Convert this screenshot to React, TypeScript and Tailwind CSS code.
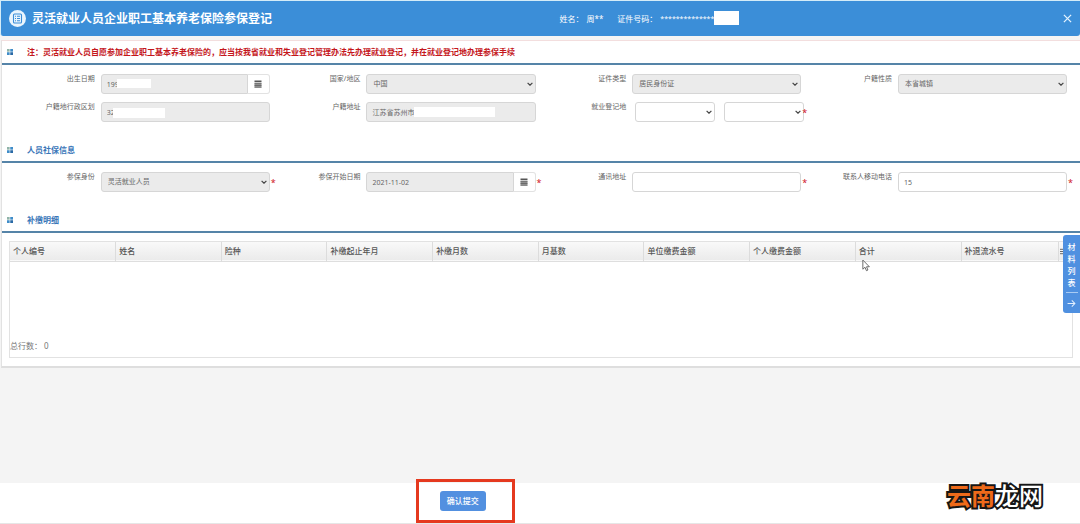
import { useId, type ReactNode } from 'react';

const controlBase =
  'block h-5 w-full min-w-0 rounded-[3px] border border-[#d6d6d6] text-[7px] leading-[18px] text-[#666] opacity-100 outline-none';

function GridMark() {
  return (
    <svg viewBox="0 0 10 10" className="size-[6px] shrink-0" aria-hidden="true">
      <rect x="0" y="0" width="4.4" height="4.4" fill="#8fb3a8" />
      <rect x="5.4" y="0" width="4.6" height="4.4" fill="#3f8cc8" />
      <rect x="0" y="5.4" width="4.4" height="4.6" fill="#3f8cc8" />
      <rect x="5.4" y="5.4" width="4.6" height="4.6" fill="#2a6aa6" />
    </svg>
  );
}

function SectionTitle({ children, note = false }: { children: ReactNode; note?: boolean }) {
  return (
    <div className="flex h-6 items-center gap-[14px] border-b-2 border-[#5584a8] pl-[5px]">
      <GridMark />
      <h2 className={note ? 'text-[8px] leading-3 font-bold text-[#c4161c]' : 'text-[8px] leading-3 font-bold text-[#3a76b8]'}>
        {children}
      </h2>
    </div>
  );
}

function Field({
  id,
  label,
  required = false,
  children,
}: {
  id: string;
  label: string;
  required?: boolean;
  children: ReactNode;
}) {
  return (
    <div className="flex items-start gap-[6px]">
      <label htmlFor={id} className="flex-1 text-right text-[7px] leading-[10px] whitespace-nowrap text-[#666]">
        {label}
      </label>
      <div className="relative w-7/11">
        {children}
        {required && (
          <span className="absolute top-[5px] left-full ml-px text-[9px] leading-3 text-[#d0141c]">*</span>
        )}
      </div>
    </div>
  );
}

function SelectBox({ id, value, disabled, name }: { id: string; value: string; disabled?: boolean; name?: string }) {
  return (
    <div className="relative min-w-0 flex-1">
      <select
        id={id}
        aria-label={name}
        disabled={disabled}
        defaultValue={value}
        className={`${controlBase} appearance-none pl-[6px] ${disabled ? 'bg-[#ebebeb]' : 'bg-white'}`}
      >
        <option value={value}>{value}</option>
      </select>
      <svg
        viewBox="0 0 10 6"
        className="pointer-events-none absolute top-2 right-[3px] h-[4px] w-[6px]"
        fill="none"
        stroke="#444"
        strokeWidth="2"
        aria-hidden="true"
      >
        <path d="M1 1l4 4 4-4" />
      </svg>
    </div>
  );
}

function TextBox({ id, value, disabled }: { id: string; value: string; disabled?: boolean }) {
  return (
    <input
      id={id}
      type="text"
      disabled={disabled}
      defaultValue={value}
      className={`${controlBase} px-[5px] ${disabled ? 'bg-[#ebebeb]' : 'bg-white'}`}
    />
  );
}

function DateBox({ id, value }: { id: string; value: string }) {
  return (
    <div className="flex h-5">
      <input
        id={id}
        type="text"
        disabled
        defaultValue={value}
        className="h-5 min-w-0 flex-1 rounded-l-[3px] border border-[#d6d6d6] bg-[#ebebeb] px-[5px] text-[7px] leading-[18px] text-[#666] opacity-100"
      />
      <button
        type="button"
        aria-label="选择日期"
        className="flex w-[22px] items-center justify-center rounded-r-[3px] border border-l-0 border-[#e2e2e2] bg-white"
      >
        <svg viewBox="0 0 16 16" className="size-2" aria-hidden="true">
          <path d="M1 1h14v3H1z" fill="#555" />
          <path d="M1 5h14v10H1z" fill="#9a9a9a" />
          <path d="M1 7.5h14M1 11h14M1 14.5h14" stroke="#606060" strokeWidth="1.6" />
        </svg>
      </button>
    </div>
  );
}

const columns = [
  '个人编号',
  '姓名',
  '险种',
  '补缴起止年月',
  '补缴月数',
  '月基数',
  '单位缴费金额',
  '个人缴费金额',
  '合计',
];

export default function App() {
  const uid = useId();
  return (
    <div className="relative flex min-h-screen flex-col bg-[#f4f4f4] font-['Noto_Sans','Noto_Sans_CJK_SC',sans-serif] text-[#444]">
      <header className="flex h-9 items-center rounded-b-[3px] border-t border-l border-[#d3ecf8] bg-[#3b8ed8] pr-2 pl-2 text-white">
        <div className="flex flex-1 items-center gap-[6px]">
          <svg viewBox="0 0 34 34" className="size-[17px]" fill="none" aria-hidden="true">
            <circle cx="17" cy="17" r="17" fill="#eaf5fd" />
            <rect x="9" y="8" width="16" height="18" rx="2" stroke="#3b8ed8" strokeWidth="2.2" />
            <path d="M12 12.5h2M16 12.5h6M12 17h2M16 17h6M12 21.5h2M16 21.5h6" stroke="#3b8ed8" strokeWidth="2" />
          </svg>
          <h1 className="text-[12px] leading-4 font-bold">灵活就业人员企业职工基本养老保险参保登记</h1>
        </div>
        <div className="flex flex-1 items-center pl-12 text-[8px] leading-3">
          <span>姓名：</span>
          <span className="ml-[3px]">周**</span>
          <span className="ml-[14px]">证件号码：</span>
          <span className="ml-[3px] text-[7px]">**************</span>
          <span className="mb-[2px] h-[14px] w-[25px] bg-white" />
        </div>
        <button type="button" aria-label="关闭" className="flex size-[10px] items-center justify-center">
          <svg viewBox="0 0 10 10" className="size-[9px]" stroke="#e6f4ff" strokeWidth="1.4" aria-hidden="true">
            <path d="M1 1l8 8M9 1L1 9" />
          </svg>
        </button>
      </header>

      <main className="mt-1 ml-px border-t border-b-2 border-l border-t-[#f3dede] border-b-[#dedede] border-l-[#e2e2e2] bg-white">
        <SectionTitle note>
          注：灵活就业人员自愿参加企业职工基本养老保险的，应当按我省就业和失业登记管理办法先办理就业登记，并在就业登记地办理参保手续
        </SectionTitle>
        <div className="grid grid-cols-4 gap-y-2 pt-[9px] pr-[13px] pb-[17px] pl-[2px]">
          <Field id={`${uid}birth`} label="出生日期">
            <DateBox id={`${uid}birth`} value="199" />
            <span className="absolute top-[5px] left-[16px] h-[9px] w-[34px] bg-white" />
          </Field>
          <Field id={`${uid}nation`} label="国家/地区">
            <SelectBox id={`${uid}nation`} value="中国" disabled />
          </Field>
          <Field id={`${uid}doc`} label="证件类型">
            <SelectBox id={`${uid}doc`} value="居民身份证" disabled />
          </Field>
          <Field id={`${uid}kind`} label="户籍性质">
            <SelectBox id={`${uid}kind`} value="本省城镇" disabled />
          </Field>
          <Field id={`${uid}area`} label="户籍地行政区划">
            <TextBox id={`${uid}area`} value="32" disabled />
            <span className="absolute top-[6px] left-3 h-[10px] w-[52px] bg-white" />
          </Field>
          <Field id={`${uid}home`} label="户籍地址">
            <TextBox id={`${uid}home`} value="江苏省苏州市" disabled />
            <span className="absolute top-[5px] left-12 h-[10px] w-[81px] bg-white" />
          </Field>
          <Field id={`${uid}reg`} label="就业登记地" required>
            <div className="-mr-[3px] flex gap-[9px] pl-[3px]">
              <SelectBox id={`${uid}reg`} value="" />
              <SelectBox id={`${uid}reg2`} value="" name="就业登记地区县" />
            </div>
          </Field>
        </div>

        <SectionTitle>人员社保信息</SectionTitle>
        <div className="grid grid-cols-4 pt-[9px] pr-[13px] pb-[17px] pl-[2px]">
          <Field id={`${uid}role`} label="参保身份" required>
            <SelectBox id={`${uid}role`} value="灵活就业人员" disabled />
          </Field>
          <Field id={`${uid}start`} label="参保开始日期" required>
            <DateBox id={`${uid}start`} value="2021-11-02" />
          </Field>
          <Field id={`${uid}addr`} label="通讯地址" required>
            <TextBox id={`${uid}addr`} value="" />
          </Field>
          <Field id={`${uid}phone`} label="联系人移动电话" required>
            <TextBox id={`${uid}phone`} value="15" />
          </Field>
        </div>

        <SectionTitle>补缴明细</SectionTitle>
        <div className="mx-[7px] mt-2 mb-2 border border-[#e2e2e2] text-[8px] leading-3">
          <table className="w-full table-fixed border-collapse">
            <thead>
              <tr className="h-[19px] border-b border-[#dedede] bg-linear-to-b from-[#f9f9f9] to-[#ebebeb]">
                {columns.map((name) => (
                  <th key={name} className="border-r border-[#dcdcdc] px-[3px] text-left font-medium text-[#555]">
                    {name}
                  </th>
                ))}
                <th className="w-[97px] border-r border-[#dcdcdc] px-[3px] text-left font-medium text-[#555]">
                  补退流水号
                </th>
                <th className="w-[14px] p-0">
                  <button type="button" aria-label="表格菜单" className="block pl-px">
                    <svg viewBox="0 0 8 8" className="size-[7px]" stroke="#555" aria-hidden="true">
                      <path d="M0 1.5h8M0 4h8M0 6.5h8" />
                    </svg>
                  </button>
                </th>
              </tr>
            </thead>
            <tbody>
              <tr className="h-[79px]">
                <td colSpan={11} />
              </tr>
            </tbody>
          </table>
          <p className="h-[17px] text-[#777]">总行数： 0</p>
        </div>
      </main>

      <div className="flex-1" />

      <footer className="h-[41px] border-b border-[#e6e6e6] bg-white">
        <div className="flex w-6/7 justify-center pt-2">
          <div className="relative flex">
            <button
              type="button"
              className="h-5 w-[46px] rounded-[3px] bg-[#5290e0] text-[8px] leading-3 font-medium text-white"
            >
              确认提交
            </button>
            <span className="pointer-events-none absolute -top-3 -left-6 h-11 w-[99px] border-3 border-[#e5391f]" />
          </div>
        </div>
      </footer>

      <aside className="absolute top-[235px] right-0 flex w-[17px] flex-col items-center rounded-l-[3px] bg-[#4f90e0] pt-[6px] pb-[5px] text-white">
        <button type="button" className="flex flex-col items-center text-[8px] leading-3 font-medium">
          <span>材</span>
          <span>料</span>
          <span>列</span>
          <span>表</span>
          <span className="mt-[3px] mb-[6px] h-px w-3 bg-[#a9cbf3]" />
          <svg viewBox="0 0 16 16" className="size-[9px]" fill="none" stroke="#e3f0ff" strokeWidth="1.8" aria-hidden="true">
            <path d="M1 8h13M8.5 2.5L14 8l-5.500 5.500" />
          </svg>
        </button>
      </aside>

      <svg viewBox="0 0 14 22" className="pointer-events-none absolute top-[259px] left-[862px] h-[13px] w-2" aria-hidden="true">
        <path d="M1.500 1.500v16l3.700-3.400 2.600 6 2.600-1.200-2.500-5.700h5z" fill="#fff" stroke="#555" strokeWidth="1.500" />
      </svg>

      <div className="pointer-events-none absolute right-[37px] bottom-3 text-[24px] leading-8 [-webkit-text-stroke:4px_#161616] [paint-order:stroke]">
        <span className="font-bold text-[#ee6a1a]">云南</span>
        <span className="font-medium text-white">龙网</span>
      </div>
    </div>
  );
}
